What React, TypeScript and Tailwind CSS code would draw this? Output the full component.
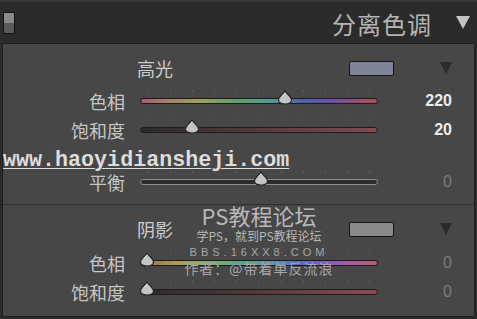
import React from "react";

const cjk = { fontFamily: '"Noto Sans CJK SC", "Noto Sans", sans-serif' };
const num = { fontFamily: '"Liberation Sans", Arial, sans-serif' };

function Thumb({ pos }: { pos: number }) {
  return (
    <svg
      width="16"
      height="15"
      viewBox="0 0 16 15"
      className="absolute top-[-8px]"
      style={{ left: `calc(${pos}% - 8px)` }}
    >
      <path
        d="M8 1 C9.5 4 14.5 6.5 14.5 10 C14.5 13 11.5 14 8 14 C4.5 14 1.5 13 1.5 10 C1.5 6.5 6.5 4 8 1 Z"
        fill="#c4c4c4"
        stroke="#262626"
        strokeWidth="1.2"
      />
      <path d="M5 6.5 C6 5.5 7 4 8 3" stroke="#e6e6e6" strokeWidth="1" fill="none" />
    </svg>
  );
}

function Slider({ pos, track }: { pos: number; track: string }) {
  return (
    <div className="relative h-[6px] w-[238px]">
      <div className="absolute left-[8px] right-[8px] top-[-8px] flex justify-between">
        {Array.from({ length: 11 }).map((_, i) => (
          <span key={i} className="h-[2px] w-[1px] bg-[#5e5e5e]" />
        ))}
      </div>
      <div className={`h-[6px] w-full rounded-full border border-[#1c1c1c] ${track}`} />
      <Thumb pos={pos} />
    </div>
  );
}

function Row({
  label,
  pos,
  track,
  value,
  bright,
}: {
  label: string;
  pos: number;
  track: string;
  value: string;
  bright?: boolean;
}) {
  return (
    <div className="flex h-[29px] items-center">
      <div className="w-[123px] pr-[1px] text-right text-[18px] leading-none text-[#c6c6c6]" style={cjk}>
        {label}
      </div>
      <div className="ml-[14px]">
        <Slider pos={pos} track={track} />
      </div>
      <div
        className={`w-[74px] text-right text-[16px] leading-none ${bright ? "font-bold text-[#ececec]" : "text-[#7c7c7c]"}`}
        style={num}
      >
        {value}
      </div>
    </div>
  );
}

function SectionHead({ title, swatch }: { title: string; swatch: string }) {
  return (
    <div className="flex h-[24px] items-center">
      <div className="ml-[134px] w-[212px] text-[18px] leading-none text-[#cccccc]" style={cjk}>
        {title}
      </div>
      <div className={`h-[15px] w-[45px] rounded-[2px] border border-[#151515] ${swatch}`} />
      <div className="ml-[46px] h-0 w-0 border-x-[6px] border-t-[12px] border-x-transparent border-t-[#2a2a2a]" />
    </div>
  );
}

export default function App() {
  return (
    <div className="relative h-[319px] w-[477px] overflow-hidden bg-[#2b2b2b]">
      {/* header */}
      <div className="flex h-[43px] items-center border-t-2 border-[#3a3a3a]">
        <div className="ml-[3px] flex h-[22px] w-[12px] flex-col overflow-hidden rounded-[2px] border border-[#111]">
          <div className="h-1/2 bg-[#8a8a8a]" />
          <div className="h-1/2 bg-[#5a5a5a]" />
        </div>
        <div className="ml-auto mt-[3px] text-[24px] leading-none tracking-[1px] text-[#b4b4b4]" style={cjk}>
          分离色调
        </div>
        <div className="ml-[24px] mr-[7px] h-0 w-0 border-x-[7px] border-t-[13px] border-x-transparent border-t-[#c4c4c4]" />
      </div>

      {/* panel */}
      <div className="mx-[2px] h-[274px] border border-[#1e1e1e] bg-[#474747] pt-[12px]">
        <SectionHead title="高光" swatch="bg-[#7e8296]" />
        <div className="mt-[6px]">
          <Row
            label="色相"
            pos={61}
            value="220"
            bright
            track="bg-[linear-gradient(90deg,#a85a6c_0%,#a8806a_12%,#9aa05a_25%,#62a06a_40%,#4f9c96_55%,#4e62a8_68%,#6a52a6_80%,#98506e_92%,#a85058_100%)]"
          />
          <Row
            label="饱和度"
            pos={22}
            value="20"
            bright
            track="bg-[linear-gradient(90deg,#2b2b2b_0%,#473636_35%,#824a52_100%)]"
          />
        </div>
        <div className="mt-[23px]">
          <Row label="平衡" pos={51} value="0" track="bg-[#2c2c2c] border-[#8e8e8e]" />
        </div>
        <div className="mt-[8px] border-t border-[#2f2f2f]" />
        <div className="mt-[12px]">
          <SectionHead title="阴影" swatch="bg-[#8a8a8a]" />
        </div>
        <div className="mt-[7px]">
          <Row
            label="色相"
            pos={3}
            value="0"
            track="bg-[linear-gradient(90deg,#9a6a4a_0%,#b09a5a_15%,#8ab070_28%,#5aa888_42%,#5a98b0_55%,#5a6ac0_68%,#8a5ac0_80%,#b05a98_90%,#b06070_100%)]"
          />
          <Row
            label="饱和度"
            pos={3}
            value="0"
            track="bg-[linear-gradient(90deg,#2b2b2b_0%,#4a3638_40%,#8a4a55_100%)]"
          />
        </div>
      </div>

      {/* watermarks */}
      <div
        className="absolute left-[3px] top-[151px] text-[21.7px] font-bold leading-[19px] text-[#dcdcdc] underline decoration-1 underline-offset-[2px]"
        style={{ fontFamily: '"Liberation Mono", "Courier New", monospace' }}
      >
        www.haoyidiansheji.com
      </div>
      <div className="absolute left-[184px] top-[204px] flex w-[150px] flex-col items-center text-[#b8b8b8]" style={cjk}>
        <div className="text-[22px] leading-[22px]">PS教程论坛</div>
        <div className="mt-[3px] text-[12px] leading-[14px]">学PS，就到PS教程论坛</div>
        <div className="mt-[3px] text-[11px] leading-[13px] tracking-[4px] text-[#a8a8a8]" style={num}>
          BBS.16XX8.COM
        </div>
        <div className="mt-[1px] text-[14px] leading-[17px] tracking-[1px] text-[#a6a6a6]">作者：@带着单反流浪</div>
      </div>
    </div>
  );
}
